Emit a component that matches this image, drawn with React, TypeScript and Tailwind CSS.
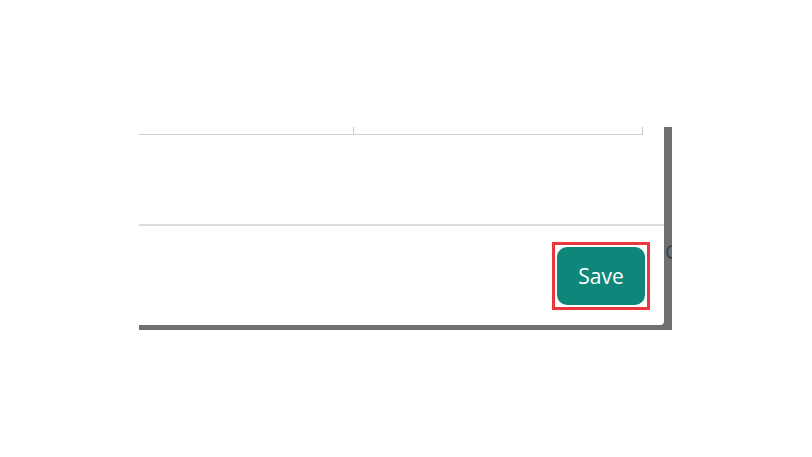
export default function App() {
  return (
    <div className="w-[812px] h-[457px] bg-white pt-[127px] pl-[139px] font-['Open_Sans',sans-serif]">
      {/* dialog edge with its shadow */}
      <div className="relative w-[533px] h-[203px] bg-[#707070]">
        <div className="w-[525px] h-[198px] bg-white rounded-br-[4px] flex flex-col">
          {/* last row of the table above */}
          <div className="flex h-[8px] border-b border-[#d2d2d2] mr-[21px]">
            <div className="w-[215px] border-r border-[#c8c8c8]" />
            <div className="flex-1 border-r border-[#c8c8c8]" />
          </div>
          <div className="h-[91px] border-b-2 border-[#dcdcdc]" />
          {/* footer */}
          <div className="flex justify-end pt-[16px] pr-[14px]">
            <div className="border-[3px] border-[#e8383d] p-[2px]">
              <button className="w-[88px] h-[58px] rounded-[10px] bg-[#0e877a] text-white text-[21px] font-medium leading-none flex items-center justify-center">
                Save
              </button>
            </div>
          </div>
        </div>
        <span className="absolute left-[526px] top-[115px] text-[20px] leading-none text-[#2d4a58] w-[7px] overflow-hidden">
          C
        </span>
      </div>
    </div>
  );
}
